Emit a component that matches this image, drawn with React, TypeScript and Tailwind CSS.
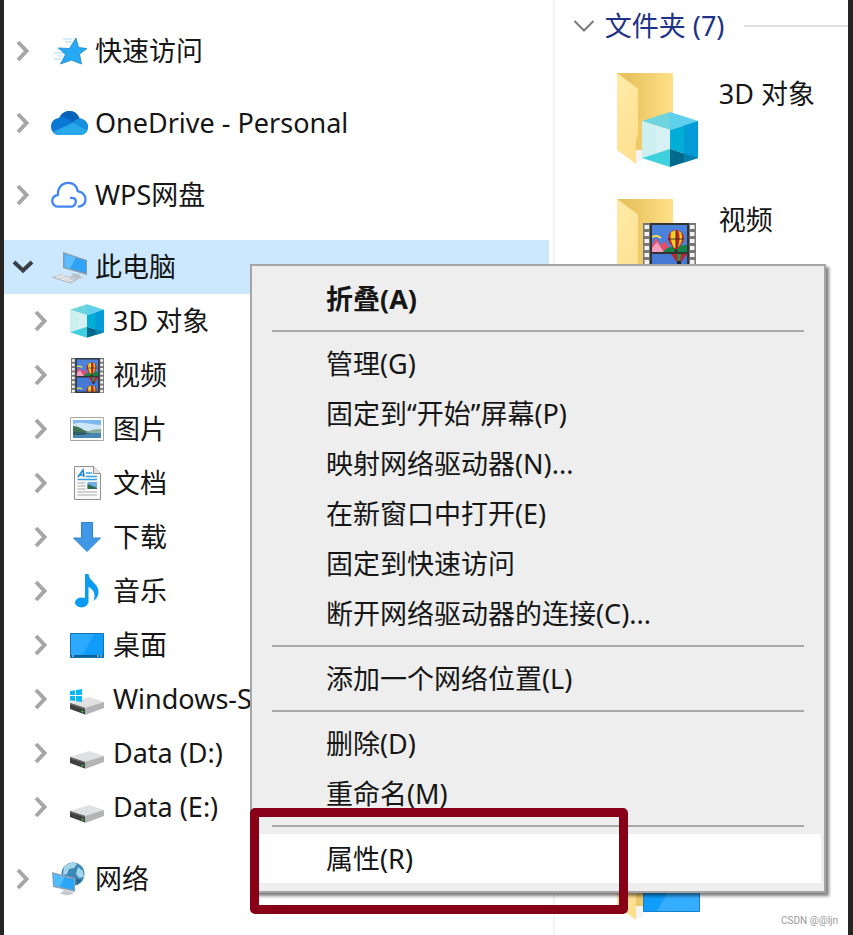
import { useState } from "react";
import type { ReactNode } from "react";

function StarIcon() {
  return (
    <svg width="36" height="36" viewBox="0 0 36 36">
      <path d="M12 6h9M14 9h7M6 16h4M3 20h10M7 23h5M3 26h7" stroke="#a9d8f5" strokeWidth="1.2" />
      <path
        d="M25 5l2.500 9.500 8.500 1-7.500 5.500 2 10-10-4-11 4 5-9.500-7-6.500 11 .500z"
        fill="#27a8f2"
        stroke="#1688cc"
        strokeWidth="0.8"
      />
    </svg>
  );
}

function OneDriveIcon() {
  return (
    <svg width="37" height="24" viewBox="0 0 37 24" className="shrink-0">
      <path
        d="M8 24A8 8 0 0 1 0 16C0 11 3 7.500 8 7C10 3 14 0 18.500 0c5 0 8.500 3 10 7.500 5 .500 8.500 4 8.500 8.500a8 8 0 0 1-8 8z"
        fill="#0a78d4"
      />
      <path d="M9.500 5C11 2 15 0 18.500 0c5 0 8.500 3 10 7.500L22 11.500C18 8 14 5.500 9.500 5z" fill="#0563b8" />
      <path d="M22 11.500c2-2.500 4-4 6.500-4 4.500 0 8.500 4 8.500 8.500l-1 3.500z" fill="#1490df" />
      <path d="M2 21l20-9.500 14.500 8C35 22.500 32 24 29 24H8c-2.500 0-4.500-1-6-3z" fill="#28a8ea" />
    </svg>
  );
}

function WpsCloudIcon() {
  return (
    <svg width="37" height="28" viewBox="0 0 37 28" fill="none" stroke="#4285f8" strokeWidth="2.400" strokeLinecap="round">
      <path d="M20.500 17c3-.500 5 1 5 3.500 0 3.500-2.500 5.500-5.500 5.500H7.500a6 6 0 0 1-.500-12C7 6 11.500 1.500 17.500 1.500c5.500 0 9 3.500 10 8.500 5 1 8 4.500 8 9 0 3.500-3 6.500-7 7" />
    </svg>
  );
}

function ComputerIcon() {
  return (
    <svg width="36" height="36" viewBox="0 0 36 36">
      <path d="M20 24l9 1.500v2l4 1-5 1.500-10-2.500 4-1z" fill="#b9c2c8" />
      <path d="M12 3l24 8v15l-24-7z" fill="#8a9ba8" />
      <path d="M13.500 5L35 12v12l-21.500-6z" fill="#2fa3f5" />
      <path d="M13.500 5L25 8.500 19 19.500l-5.500-1.500z" fill="#5cbcff" />
      <path d="M1 28l9-3 17 5-8 4z" fill="#c9cdd0" />
      <path d="M5 28l14 5M8 27l14 5M5 29l9-3M10 31l8-3" stroke="#f5f5f5" strokeWidth="0.8" />
      <path d="M1 28l18 6 8-4" stroke="#a6abb0" strokeWidth="0.8" fill="none" />
    </svg>
  );
}

function CubeShape() {
  return (
    <>
      <path d="M28 0L0 9l28 9z" fill="#6ed5df" />
      <path d="M28 0l28 9-28 9z" fill="#5fcfee" />
      <path d="M0 9l28 9v19L0 46z" fill="#cdeff0" />
      <path d="M14 13.500l14 4.500v19l-14 4.500z" fill="#d5f1f4" />
      <path d="M28 18l28-9v37l-28-9z" fill="#02aed6" />
      <path d="M42 13.500L56 9v37l-14-4.500z" fill="#039ad8" />
      <path d="M0 46l28-9v18z" fill="#3fd0de" />
      <path d="M28 37l28 9-28 9z" fill="#016a8c" />
      <path d="M42 41.500L56 46l-14 4.500z" fill="#0480ae" />
    </>
  );
}

function CubeIcon() {
  return (
    <svg width="34" height="34" viewBox="0 0 56 55">
      <CubeShape />
    </svg>
  );
}

function Balloon() {
  return (
    <>
      <path d="M-8 0a8 8 0 0 1 16 0c0 5-4 7-6 11h-4c-2-4-6-6-6-11z" fill="#c4242a" />
      <path d="M-5-6C-6.500 0-4.500 5-2 10L0 10V-8zM2-7.500c2 4 2 10 0 17l1-1C6 4 7 0 5-5.500z" fill="#f3cf25" />
      <path d="M0-8V10M-8 1H8" stroke="#3d2618" strokeWidth="0.9" />
      <path d="M-1.500 11.500h3v2.500h-3z" fill="#3b2a1a" />
    </>
  );
}

function FilmShape({ id }: { id: string }) {
  const holes = [2, 9, 16, 23, 30, 37, 44, 51];
  return (
    <>
      <clipPath id={`${id}-top`}>
        <path d="M9 2h35v27H9z" />
      </clipPath>
      <clipPath id={`${id}-bottom`}>
        <path d="M9 31h35v23H9z" />
      </clipPath>
      <path d="M0 0h53v56H0z" fill="#777" />
      <path d="M7 0h39v56H7z" fill="#333" />
      {holes.map((y) => (
        <g key={y} fill="#f2f2f2">
          <path d={`M1.500 ${y}h4.500v4H1.500z`} />
          <path d={`M47 ${y}h4.500v4H47z`} />
        </g>
      ))}
      <g clipPath={`url(#${id}-top)`}>
        <path d="M9 2h35v27H9z" fill="#4a82dc" />
        <path d="M9 22l4-7 5 7 4-4 8 12H9z" fill="#e24f6b" />
        <path d="M9 25l5-6 7 10H9z" fill="#f3a0c0" />
        <path d="M9 14c4-2 6-1 9 1" stroke="#f1e14c" strokeWidth="2" fill="none" />
        <path d="M20 29c4-6 12-6 24-7v7z" fill="#12844a" />
        <g transform="translate(33 15)">
          <Balloon />
        </g>
      </g>
      <g clipPath={`url(#${id}-bottom)`}>
        <path d="M9 31h35v23H9z" fill="#4479d4" />
        <path d="M28 31h16l-5 7h-6z" fill="#bd2630" />
        <path d="M34 31h4l-1 7h-2z" fill="#1f9a57" />
        <path d="M34 38h4v3h-4z" fill="#222" />
        <path d="M9 49c4-2 6-1 9 1" stroke="#f1e14c" strokeWidth="2" fill="none" />
        <g transform="translate(33 52)">
          <Balloon />
        </g>
      </g>
    </>
  );
}

function FilmIcon() {
  return (
    <svg width="33" height="35" viewBox="0 0 53 56">
      <FilmShape id="film-small" />
    </svg>
  );
}

function PictureIcon() {
  return (
    <svg width="34" height="24" viewBox="0 0 34 24">
      <path d="M0.500.500h33v23H.500z" fill="#fff" stroke="#a6a6a6" />
      <path d="M3 3h28v18H3z" fill="#7db8f0" />
      <path d="M3 7c8-3 16 0 28 1v8H3z" fill="#cfe6f6" />
      <path d="M3 9c5 0 9 3 13 5l6 2H3z" fill="#3f7355" />
      <path d="M16 15c5-2 9-3 15-3v4H16z" fill="#86b09c" />
      <path d="M3 16h28v5H3z" fill="#4a86b4" />
      <path d="M3 15l18 1-8 2H3z" fill="#2f5c6a" />
    </svg>
  );
}

function DocumentIcon() {
  return (
    <svg width="27" height="34" viewBox="0 0 27 34">
      <path d="M.500.500h19l7 7v26H.500z" fill="#fafafa" stroke="#8f8f8f" />
      <path d="M19.500.500v7h7" fill="#e6e6e6" stroke="#8f8f8f" />
      <path d="M4 11L9 4l1 7M6 9h4" stroke="#1a86d0" strokeWidth="1.600" fill="none" />
      <path d="M12 7h6M12 10.500h11M3.500 13.500H23" stroke="#35a0e6" strokeWidth="1.400" />
      <path d="M3.500 17h8M3.500 20h8M3.500 23h8M3.500 26H23M3.500 29H23" stroke="#a9a9a9" strokeWidth="1.200" />
      <path d="M13.500 16H23v7h-9.500z" fill="#6faee0" />
      <path d="M13.500 18l9.500 4v1h-9.500z" fill="#2f6b4f" />
    </svg>
  );
}

function DownloadIcon() {
  return (
    <svg width="28" height="30" viewBox="0 0 28 30">
      <path d="M8.500.500h11V16h8L14 29.500.500 16h8z" fill="#3f97e6" stroke="#2f84d2" />
    </svg>
  );
}

function MusicIcon() {
  return (
    <svg width="26" height="34" viewBox="0 0 26 34">
      <ellipse cx="7.500" cy="28.500" rx="6.500" ry="5" fill="#0a9bf2" />
      <path d="M11 0h3.500c1 8 10 9 10 18 0 4-2 7-5 9 3-8-1-12-5-14v16H11z" fill="#0a9bf2" />
    </svg>
  );
}

function DesktopIcon() {
  return (
    <svg width="34" height="25" viewBox="0 0 34 25">
      <path d="M.500.500h33v24H.500z" fill="#109cfb" stroke="#1273b5" />
      <path d="M1 1h23L13 22H1z" fill="#2aa9ff" />
      <path d="M1 22h32v2H1z" fill="#0d5f98" />
      <path d="M2 23h2M27 23h2M30 23h2" stroke="#d8ecfa" />
    </svg>
  );
}

function DriveIcon({ system }: { system?: boolean }) {
  return (
    <svg width="34" height="32" viewBox="0 0 34 32">
      <path d="M0 20l19-6 15 5-18 7z" fill="#dfe0e2" />
      <path d="M15 25l19-6v6l-19 7z" fill="#b3b4b6" />
      <path d="M0 20l15 5v6.500L0 26z" fill="#3f3f3f" />
      <path d="M0 20l15 5v1.500L0 21.500z" fill="#6a6a6a" />
      <path d="M11.500 27.500l2 .600v1.600l-2-.600z" fill="#36d046" />
      {system && (
        <path d="M0 8l5-.800V12H0zM6 7l6-1v6H6zM0 13h5v5l-5-.500zM6 13h6v6l-6-.800z" fill="#08b9f5" />
      )}
    </svg>
  );
}

function NetworkIcon() {
  return (
    <svg width="34" height="34" viewBox="0 0 34 34">
      <circle cx="21" cy="12" r="11.500" fill="#3b88b8" />
      <path d="M12 5c4-5 11-5 13-3l-3 4-5 1-2 5-4 1zM26 5l5 4 1 6-5 1-3-4z" fill="#a4d4e8" />
      <path d="M24 17l6 1-5 5z" fill="#2a6890" />
      <path d="M12 28l8 2 2 2-8 1.500-6-2z" fill="#c4cbd0" />
      <path d="M0 10l23 6v14L1 25z" fill="#8ea4b3" />
      <path d="M1.500 12L22 17.500V28L2 23.500z" fill="#2aa5f6" />
      <path d="M1.500 12l11 3L8 25l-6-1.500z" fill="#53bbff" />
    </svg>
  );
}

function FolderIcon({ children }: { children?: ReactNode }) {
  return (
    <svg width="90" height="95" viewBox="0 0 90 95" className="shrink-0">
      <defs>
        <linearGradient id="folder-back" x1="0" x2="1">
          <stop offset="0.200" stopColor="#e8c25f" />
          <stop offset="1" stopColor="#ffe187" />
        </linearGradient>
        <linearGradient id="folder-flap" x1="0" x2="0.400" y1="0" y2="1">
          <stop offset="0" stopColor="#ffeba8" />
          <stop offset="1" stopColor="#fee091" />
        </linearGradient>
      </defs>
      <path d="M18 91l8-4v-10h-8z" fill="#f4f4f4" />
      <path d="M0 0h56v77H18z" fill="url(#folder-back)" />
      <path d="M0 0l19 14q2 1 2 3v46l-2 4v24L0 77z" fill="url(#folder-flap)" />
      {children}
    </svg>
  );
}

const topPlaces = [
  { label: "快速访问", icon: <StarIcon /> },
  { label: "OneDrive - Personal", icon: <OneDriveIcon /> },
  { label: "WPS网盘", icon: <WpsCloudIcon /> },
];

const computerPlaces = [
  { label: "3D 对象", icon: <CubeIcon /> },
  { label: "视频", icon: <FilmIcon /> },
  { label: "图片", icon: <PictureIcon /> },
  { label: "文档", icon: <DocumentIcon /> },
  { label: "下载", icon: <DownloadIcon /> },
  { label: "音乐", icon: <MusicIcon /> },
  { label: "桌面", icon: <DesktopIcon /> },
  { label: "Windows-SSD (C:)", icon: <DriveIcon system /> },
  { label: "Data (D:)", icon: <DriveIcon /> },
  { label: "Data (E:)", icon: <DriveIcon /> },
];

const folders = [
  {
    label: "3D 对象",
    badge: (
      <g transform="translate(25 39)">
        <CubeShape />
      </g>
    ),
  },
  {
    label: "视频",
    badge: (
      <g transform="translate(26 24)">
        <FilmShape id="film-large" />
      </g>
    ),
  },
  { label: "图片" },
  { label: "文档" },
  { label: "下载" },
  { label: "音乐" },
  {
    label: "桌面",
    badge: (
      <>
        <path d="M26.500 43.500h56v39h-56z" fill="#109cfb" stroke="#1681c8" />
        <path d="M62 44h20v38H40z" fill="#35adff" />
      </>
    ),
  },
];

const menuGroups = [
  ["折叠(A)"],
  [
    "管理(G)",
    "固定到“开始”屏幕(P)",
    "映射网络驱动器(N)...",
    "在新窗口中打开(E)",
    "固定到快速访问",
    "断开网络驱动器的连接(C)...",
  ],
  ["添加一个网络位置(L)"],
  ["删除(D)", "重命名(M)"],
  ["属性(R)"],
];

type TreeRowProps = {
  label: string;
  icon: ReactNode;
  nested?: boolean;
  selected?: boolean;
  open?: boolean;
  onToggle?: () => void;
};

function TreeRow({ label, icon, nested, selected, open, onToggle }: TreeRowProps) {
  return (
    <div
      className={`flex h-[54px] items-center overflow-hidden ${nested ? "pl-[26px]" : "pl-2"} ${
        selected ? "bg-[#cce8ff]" : ""
      }`}
    >
      <button
        aria-label={`展开 ${label}`}
        aria-expanded={!!open}
        onClick={onToggle}
        className="flex h-6 w-[22px] shrink-0 items-center justify-center"
      >
        {open ? (
          <svg width="22" height="14" viewBox="0 0 22 14">
            <path d="M2 2l9 8.500L20 2" fill="none" stroke="#3a3f45" strokeWidth="4" />
          </svg>
        ) : (
          <svg width="14" height="22" viewBox="0 0 14 22">
            <path d="M2 2l8.500 9L2 20" fill="none" stroke="#a6a6a6" strokeWidth="4" />
          </svg>
        )}
      </button>
      <a href="#" className="ml-[17px] flex items-center gap-2 whitespace-nowrap">
        <span className="flex size-9 items-center justify-center">{icon}</span>
        {label}
      </a>
    </div>
  );
}

function ContextMenu() {
  return (
    <div
      role="menu"
      className="absolute top-[264px] left-[246px] w-[576px] border-2 border-[#a5a5a5] bg-[#eeeeee] px-[3px] py-2 shadow-[3px_3px_3px_rgba(0,0,0,0.5)]"
    >
      {menuGroups.map((group, i) => (
        <div key={group[0]}>
          {i > 0 && <div role="separator" className="mx-[17px] my-[7px] h-0.5 bg-[#a8a8a8]" />}
          <div className="flex flex-col gap-px">
            {group.map((item) => (
              <button
                key={item}
                role="menuitem"
                className={`h-[49px] pl-[71px] text-left hover:bg-white ${i === 0 ? "font-bold" : ""} ${
                  item === "属性(R)" ? "bg-white" : ""
                }`}
              >
                {item}
              </button>
            ))}
          </div>
        </div>
      ))}
    </div>
  );
}

export default function App() {
  const [open, setOpen] = useState(true);

  return (
    <div className="relative flex min-h-screen overflow-hidden border-r-[5px] border-l-4 border-[#262524] bg-white font-['Noto_Sans','Noto_Sans_CJK_SC',sans-serif] text-[27px] leading-9 text-[#161616]">
      <nav className="flex min-w-0 flex-[550] flex-col gap-[18px] border-r-2 border-[#f3f3f3] pt-6 pr-1">
        {topPlaces.map((p) => (
          <TreeRow key={p.label} label={p.label} icon={p.icon} />
        ))}
        <div>
          <TreeRow label="此电脑" icon={<ComputerIcon />} selected open={open} onToggle={() => setOpen(!open)} />
          {open &&
            computerPlaces.map((p) => <TreeRow key={p.label} label={p.label} icon={p.icon} nested />)}
        </div>
        <TreeRow label="网络" icon={<NetworkIcon />} />
      </nav>

      <main className="min-w-0 flex-[296] pt-2">
        <div className="flex items-center pl-[18px]">
          <button className="flex shrink-0 items-center gap-2.5 text-[#1e3287]">
            <svg width="22" height="14" viewBox="0 0 22 14">
              <path d="M1.500 2L11 11.500 20.500 2" fill="none" stroke="#7a7a7a" strokeWidth="2" />
            </svg>
            <h2>文件夹 (7)</h2>
          </button>
          <div className="ml-5 h-0.5 flex-1 bg-[#e0e0e0]" />
        </div>
        <ul className="flex flex-col gap-[31px] pt-[29px] pl-[62px]">
          {folders.map((f) => (
            <li key={f.label}>
              <a href="#" className="flex h-[95px] items-start gap-3">
                <FolderIcon>{f.badge}</FolderIcon>
                <span className="pt-[3px] whitespace-nowrap">{f.label}</span>
              </a>
            </li>
          ))}
        </ul>
      </main>

      <ContextMenu />
      <div className="pointer-events-none absolute top-[808px] left-[246px] h-[106px] w-[378px] rounded-[5px] border-[9px] border-[#870018]" />
      <p className="absolute right-2.5 bottom-1.5 font-[Roboto,sans-serif] text-[10px] leading-4 text-[#9a9a9a]">
        CSDN @@ljn
      </p>
    </div>
  );
}
